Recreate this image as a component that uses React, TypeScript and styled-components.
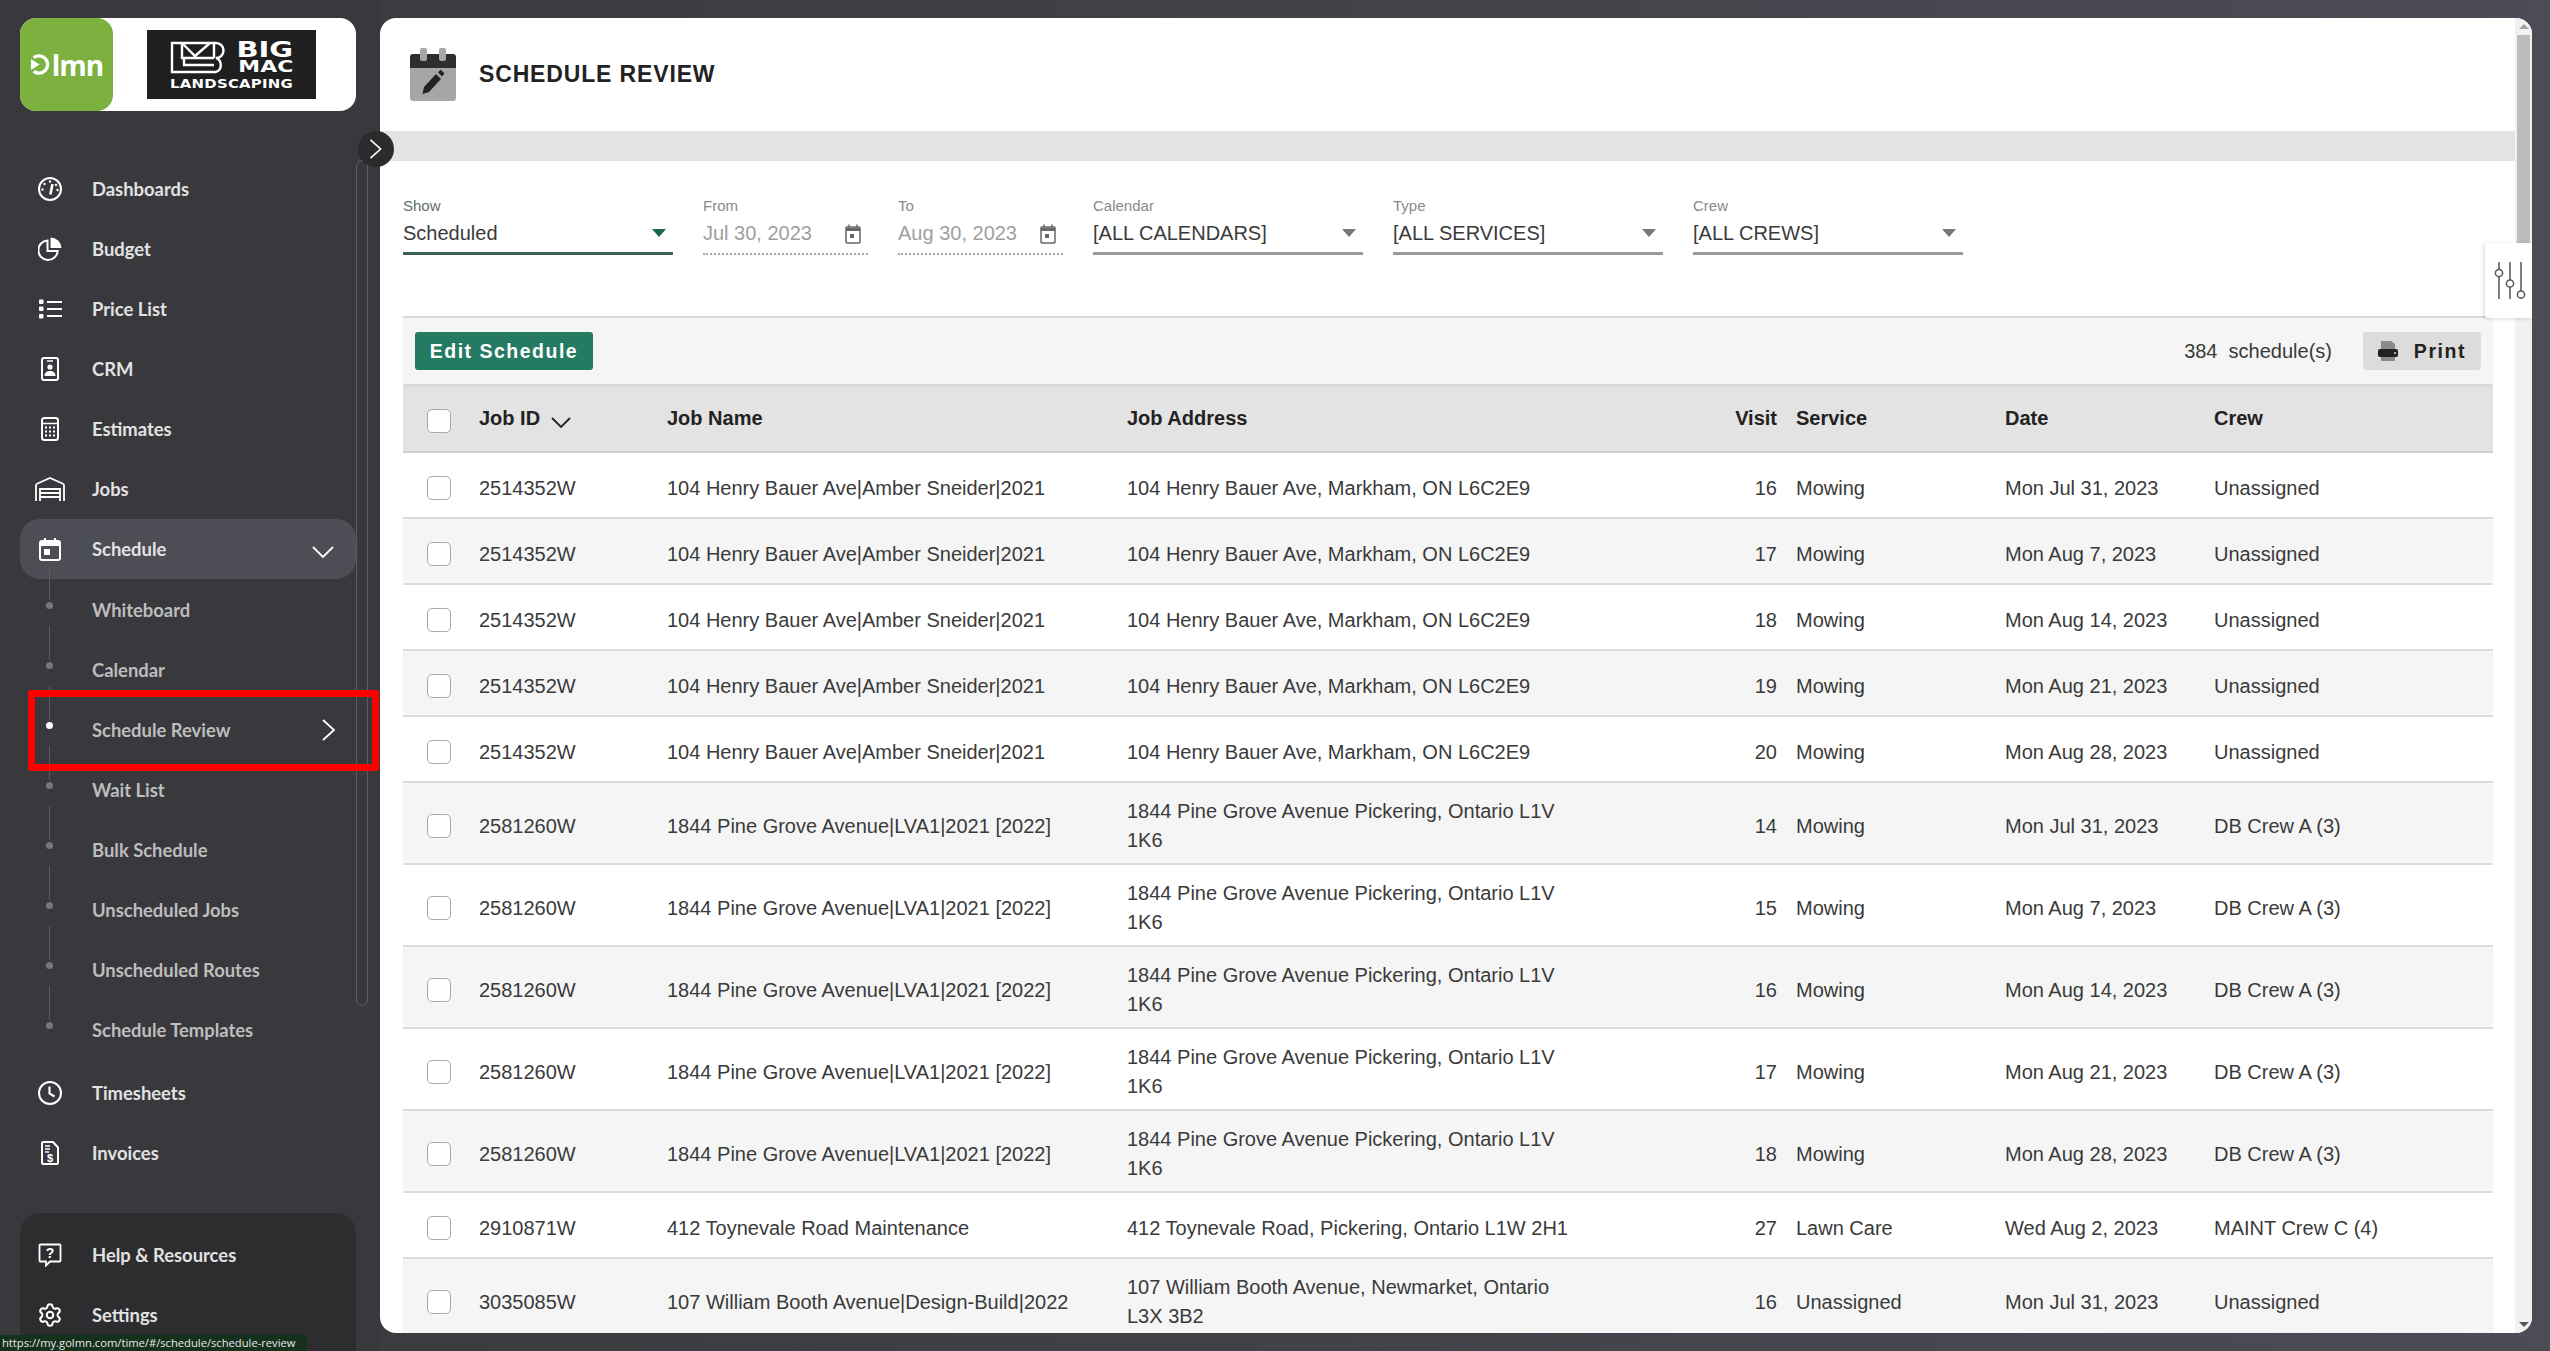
import { ReactNode } from 'react'
import styled, { createGlobalStyle } from 'styled-components'
import { Settings } from 'lucide-react'

const GlobalStyle = createGlobalStyle`
    * { box-sizing: border-box; }
    html, body { margin: 0; height: 100%; overflow: hidden; }
    body { font-family: "Liberation Sans", Arial, sans-serif; }
    #root { height: 100%; }
`

const Page = styled.div`
    display: flex;
    height: 100vh;
    background: linear-gradient(90deg, #38383c 0%, #3f3f45 40%, #4c4c56 100%);
`

const Sidebar = styled.aside`
    position: relative;
    z-index: 2;
    flex: 0 0 380px;
    display: flex;
    flex-direction: column;
    padding: 18px 24px 0 20px;
    background: #39393d;
`

const LogoCard = styled.div`
    display: flex;
    align-items: center;
    height: 93px;
    background: #fff;
    border-radius: 16px;
`

const LmnTile = styled.div`
    display: flex;
    align-items: center;
    justify-content: center;
    gap: 1px;
    width: 93px;
    height: 93px;
    background: #7cb13f;
    border-radius: 16px;
    color: #fff;
    font-family: "Open Sans", sans-serif;
    font-weight: 700;
    font-size: 28px;
    letter-spacing: -1px;
`

const BrandPlate = styled.div`
    display: flex;
    flex-direction: column;
    align-items: center;
    justify-content: center;
    gap: 5px;
    width: 169px;
    height: 69px;
    margin-left: 34px;
    background: #1f1f1f;
    color: #fff;
    font-family: "DejaVu Sans", sans-serif;
    font-weight: 700;
`

const BrandTop = styled.div`
    display: flex;
    align-items: center;
    justify-content: space-between;
    width: 123px;
`

const BrandWords = styled.div`
    display: flex;
    flex-direction: column;
    align-items: flex-end;
    line-height: 1;
`

const BrandBig = styled.span`
    font-size: 21px;
    line-height: 18px;
    transform: scaleX(1.38);
    transform-origin: right center;
`

const BrandMac = styled.span`
    font-size: 16.5px;
    line-height: 15px;
    transform: scaleX(1.33);
    transform-origin: right center;
`

const BrandSub = styled.span`
    font-size: 12px;
    line-height: 10px;
    letter-spacing: 0.2px;
    transform: scaleX(1.24);
`

const Nav = styled.nav`
    display: flex;
    flex-direction: column;
    margin-top: 48px;
`

const NavItem = styled.div<{ $active?: boolean }>`
    display: flex;
    align-items: center;
    height: 60px;
    border-radius: 20px;
    background: ${p => (p.$active ? '#4c4d55' : 'transparent')};
    color: #e2e2e2;
    font-family: Lato, sans-serif;
    font-weight: 700;
    font-size: 18.4px;
`

const NavIcon = styled.span`
    display: flex;
    align-items: center;
    justify-content: center;
    flex: 0 0 60px;
    margin-right: 12px;
    color: #fff;
`

const NavChevron = styled.span<{ $inset: number; $drop?: number }>`
    display: flex;
    margin-left: auto;
    margin-right: ${p => p.$inset}px;
    margin-top: ${p => p.$drop || 0}px;
    color: #fff;
`

const SubItem = styled.div`
    position: relative;
    display: flex;
    align-items: center;
    height: 60px;
    padding: 2px 0 0 72px;
    color: #bdbdbd;
    font-family: Lato, sans-serif;
    font-weight: 700;
    font-size: 18.4px;

    &::before {
        content: '';
        position: absolute;
        left: 29px;
        top: -13px;
        width: 1px;
        height: 34px;
        background: #5c5c61;
    }
`

const SubDot = styled.span<{ $active?: boolean }>`
    position: absolute;
    left: 26px;
    top: 23px;
    width: 7px;
    height: 7px;
    border-radius: 50%;
    background: ${p => (p.$active ? '#fff' : '#77777c')};
`

const TimeGroup = styled.div`
    display: flex;
    flex-direction: column;
    margin-top: 4px;
`

const BottomNav = styled.div`
    position: absolute;
    left: 20px;
    right: 24px;
    bottom: 0;
    height: 138px;
    padding-top: 12px;
    background: #2d2d30;
    border-radius: 20px 20px 0 0;
`

const SideScroll = styled.div`
    position: absolute;
    left: 356px;
    top: 160px;
    width: 12px;
    height: 846px;
    border: 1px solid #5c5c62;
    border-radius: 8px;
`

const ToggleButton = styled.div`
    position: absolute;
    left: 358px;
    top: 131px;
    display: flex;
    align-items: center;
    justify-content: center;
    width: 36px;
    height: 36px;
    border-radius: 50%;
    background: #2b2b2e;
    color: #fff;
`

const Highlight = styled.div`
    position: absolute;
    left: 28px;
    top: 690px;
    width: 351px;
    height: 81px;
    border: 7px solid #fe0000;
    border-radius: 3px;
`

const StatusBar = styled.div`
    position: fixed;
    left: 0;
    bottom: 0;
    z-index: 5;
    width: 307px;
    height: 16px;
    padding-left: 2px;
    overflow: hidden;
    background: #14311c;
    color: #e8e8e8;
    font-family: "Open Sans", sans-serif;
    font-size: 11.2px;
    line-height: 16px;
    white-space: nowrap;
`

const Main = styled.main`
    flex: 1;
    min-width: 0;
    padding: 18px 18px 18px 0;
`

const Panel = styled.div`
    position: relative;
    display: flex;
    height: 100%;
    overflow: hidden;
    background: #fff;
    border-radius: 16px;
`

const Content = styled.div`
    flex: 1;
    min-width: 0;
    overflow: hidden;
`

const PageHeader = styled.header`
    display: flex;
    align-items: center;
    gap: 23px;
    height: 113px;
    padding-left: 30px;
`

const PageTitle = styled.h1`
    margin: 0;
    color: #222;
    font-size: 23px;
    font-weight: 700;
    letter-spacing: 0.85px;
`

const Band = styled.div`
    height: 30px;
    background: #e3e3e5;
`

const Filters = styled.div`
    display: flex;
    gap: 30px;
    height: 155px;
    padding: 35px 0 0 23px;
`

const Field = styled.div<{ $width: number }>`
    width: ${p => p.$width}px;
`

const FieldLabel = styled.div<{ $tone?: string }>`
    height: 20px;
    color: ${p => p.$tone || '#8a8a8a'};
    font-size: 15px;
    line-height: 20px;
`

const FieldValue = styled.div<{ $line: string; $muted?: boolean; $inset: number }>`
    display: flex;
    align-items: center;
    justify-content: space-between;
    height: 39px;
    padding: 0 ${p => p.$inset}px 2px 0;
    border-bottom: ${p => p.$line};
    color: ${p => (p.$muted ? '#a0a0a0' : '#3a3a3a')};
    font-size: 20px;
`

const Caret = styled.span<{ $color: string }>`
    width: 0;
    height: 0;
    border-left: 7px solid transparent;
    border-right: 7px solid transparent;
    border-top: 8px solid ${p => p.$color};
`

const Toolbar = styled.div`
    display: flex;
    align-items: center;
    justify-content: space-between;
    height: 71px;
    margin: 0 22px 0 23px;
    padding: 0 12px;
    background: #f5f5f5;
    border-top: 2px solid #d9d9d9;
    border-bottom: 3px solid #d9d9d9;
`

const PrimaryButton = styled.button`
    height: 38px;
    width: 178px;
    border: 0;
    border-radius: 3px;
    background: #257a62;
    color: #fff;
    font: 700 19.5px "Liberation Sans", Arial, sans-serif;
    letter-spacing: 1.5px;
`

const ToolbarEnd = styled.div`
    display: flex;
    align-items: center;
    gap: 31px;
    color: #3a3a3a;
    font-size: 20px;
`

const PrintButton = styled.button`
    display: flex;
    align-items: center;
    justify-content: center;
    gap: 16px;
    height: 38px;
    width: 118px;
    border: 0;
    border-radius: 3px;
    background: #dcdcdc;
    color: #222;
    font: 700 19.5px "Liberation Sans", Arial, sans-serif;
    letter-spacing: 1.6px;
`

const Table = styled.div`
    margin: 0 22px 0 23px;
`

const columns = '76px 188px 460px 450px 200px 228px 209px 279px'

const HeadRow = styled.div`
    display: grid;
    grid-template-columns: ${columns};
    align-items: center;
    height: 66px;
    padding-bottom: 2px;
    background: #e3e3e3;
    border-bottom: 2px solid #d0d0d0;
    color: #222;
    font-size: 20px;
    font-weight: 700;
`

const Row = styled.div<{ $odd: boolean }>`
    display: grid;
    grid-template-columns: ${columns};
    align-items: center;
    min-height: 66px;
    padding: 14px 0 8px;
    background: ${p => (p.$odd ? '#fff' : '#f5f5f5')};
    border-bottom: 2px solid #dcdcdc;
    color: #3a3a3a;
    font-size: 20px;
    line-height: 29px;
`

const CheckCell = styled.div`
    display: flex;
    padding-left: 24px;
`

const Checkbox = styled.span<{ $drop?: number }>`
    display: block;
    width: 24px;
    height: 24px;
    margin-top: ${p => p.$drop || 0}px;
    background: #fff;
    border: 1px solid #a9a9a9;
    border-radius: 5px;
`

const SortCell = styled.div`
    display: flex;
    align-items: center;
    gap: 11px;
`

const SortIcon = styled.svg`
    margin-top: 10px;
`

const VisitCell = styled.div`
    text-align: right;
`

const ServiceCell = styled.div`
    padding-left: 19px;
`

const ScrollTrack = styled.div`
    display: flex;
    flex-direction: column;
    align-items: center;
    justify-content: space-between;
    flex: 0 0 17px;
    background: #f1f1f1;
`

const ScrollArrow = styled.span<{ $up?: boolean }>`
    flex: none;
    width: 0;
    height: 0;
    margin: 6px 0;
    border-left: 5px solid transparent;
    border-right: 5px solid transparent;
    border-top: ${p => (p.$up ? '0' : '5px solid #555')};
    border-bottom: ${p => (p.$up ? '5px solid #a3a3a3' : '0')};
`

const ScrollThumb = styled.div`
    width: 13px;
    height: 270px;
    margin-bottom: auto;
    background: #bdbdbd;
`

const FilterTab = styled.div`
    position: absolute;
    right: 0;
    top: 225px;
    display: flex;
    align-items: center;
    justify-content: center;
    width: 47px;
    height: 75px;
    padding-left: 3px;
    background: #fff;
    border-radius: 3px 0 0 3px;
    box-shadow: -1px 1px 4px rgba(0, 0, 0, 0.15);
`

const Svg = ({ w = 24, h = 24, children }: { w?: number; h?: number; children: ReactNode }) => (
    <svg width={w} height={h} viewBox={`0 0 ${w} ${h}`} fill="none" stroke="currentColor" strokeWidth="2">
        {children}
    </svg>
)

const icons: { [key: string]: ReactNode } = {
    dashboards: (
        <Svg>
            <circle cx="12" cy="12" r="11" />
            <path d="M14.5 7 12.4 17.5" strokeWidth="2.6" />
            <g fill="currentColor" stroke="none">
                <circle cx="12" cy="4.5" r="1.2" />
                <circle cx="6.5" cy="7" r="1.2" />
                <circle cx="4.5" cy="12.5" r="1.2" />
                <circle cx="18" cy="8" r="1.2" />
                <circle cx="19.5" cy="13" r="1.2" />
            </g>
        </Svg>
    ),
    budget: (
        <Svg>
            <path d="M9.5 3.5A9.7 9.7 0 1 0 19.7 14H9.5Z" strokeWidth="2" />
            <path d="M12.5 0.5A11 11 0 0 1 23.5 11H12.5Z" fill="currentColor" stroke="none" />
        </Svg>
    ),
    priceList: (
        <Svg h={20}>
            <path d="M9 3h15M9 10h15M9 17h15" strokeWidth="1.8" />
            <g fill="currentColor" stroke="none">
                <rect x="1" y="0.5" width="4.5" height="4.5" rx="1" />
                <rect x="1" y="7.5" width="4.5" height="4.5" rx="1" />
                <rect x="1" y="15" width="4.5" height="4.5" rx="1" />
            </g>
        </Svg>
    ),
    crm: (
        <Svg w={18} h={24}>
            <rect x="1" y="1" width="16" height="22" rx="2" />
            <path d="M6 4h6" strokeWidth="1.5" />
            <circle cx="9" cy="10" r="2.6" fill="currentColor" stroke="none" />
            <path d="M3.5 19c0-3.5 2.2-5 5.5-5s5.5 1.5 5.5 5Z" fill="currentColor" stroke="none" />
        </Svg>
    ),
    estimates: (
        <Svg w={18} h={24}>
            <rect x="1" y="1" width="16" height="22" rx="2.5" />
            <path d="M1 6.5h16" strokeWidth="1.5" />
            <path d="M4 10.5h10M4 14.5h10M4 18.5h10" strokeWidth="2" strokeDasharray="2 2" />
        </Svg>
    ),
    jobs: (
        <Svg w={30} h={24}>
            <path d="M1 24V8.5Q1 7 2.5 6.5L15 1l12.5 5.5Q29 7 29 8.5V24" strokeWidth="1.8" />
            <path d="M5 24V12h20v12M5 16h20M5 20h20" strokeWidth="1.8" />
        </Svg>
    ),
    schedule: (
        <Svg w={22} h={24}>
            <rect x="1" y="4" width="20" height="19" rx="2" />
            <path d="M1 7h20" strokeWidth="4" />
            <path d="M6 1v3M16 1v3" strokeWidth="2" />
            <rect x="5" y="12" width="6" height="6" fill="currentColor" stroke="none" />
        </Svg>
    ),
    timesheets: (
        <Svg>
            <circle cx="12" cy="12" r="11" />
            <path d="M11.5 5.5v7l5 3" strokeWidth="2.2" />
        </Svg>
    ),
    invoices: (
        <Svg w={18} h={24}>
            <path d="M2.5 1H12l5 5.5V21.5Q17 23 15.5 23H2.5Q1 23 1 21.5V2.5Q1 1 2.5 1Z" />
            <path d="M4 5h5M4 8h5M4 11h4" strokeWidth="1.5" />
            <text x="9" y="21" textAnchor="middle" fontSize="11" fontWeight="700" fontFamily="Liberation Sans" fill="currentColor" stroke="none">$</text>
        </Svg>
    ),
    help: (
        <Svg>
            <path d="M2.5 1.5h19q1 0 1 1v15q0 1-1 1H12l-4 4v-4H2.5q-1 0-1-1v-15q0-1 1-1Z" strokeWidth="1.8" />
            <text x="12" y="15" textAnchor="middle" fontSize="14" fontWeight="700" fontFamily="Liberation Sans" fill="currentColor" stroke="none">?</text>
        </Svg>
    ),
}

const ChevronRight = ({ size = 24 }: { size?: number }) => (
    <svg width={size} height={size} viewBox="0 0 24 24" fill="none" stroke="currentColor" strokeWidth="1.8">
        <path d="M6 2l11 10L6 22" />
    </svg>
)

const ChevronDown = () => (
    <svg width="22" height="14" viewBox="0 0 22 14" fill="none" stroke="currentColor" strokeWidth="1.8">
        <path d="M1 2l10 10L21 2" />
    </svg>
)

const TitleIcon = () => (
    <svg width="46" height="53" viewBox="0 0 46 53">
        <path d="M0 9a3 3 0 0 1 3-3h40a3 3 0 0 1 3 3v11H0Z" fill="#2e2e30" />
        <path d="M0 20h46v30a3 3 0 0 1-3 3H3a3 3 0 0 1-3-3Z" fill="#a6a6a6" />
        <rect x="10" y="0" width="7" height="13" rx="2" fill="#a6a6a6" />
        <rect x="29" y="0" width="7" height="13" rx="2" fill="#a6a6a6" />
        <path d="M12.5 46l1.5-7 12-13 5 5-12 13Z" fill="#222" />
        <path d="M28 24.5l2.5-3 4 4-2.5 3Z" fill="#222" />
    </svg>
)

const DateIcon = () => (
    <svg width="16" height="20" viewBox="0 0 16 20" fill="none" stroke="#666" strokeWidth="1.5">
        <rect x="1" y="3" width="14" height="16" rx="1" />
        <path d="M1 5.5h14" strokeWidth="3" />
        <path d="M4 0.5v3M12 0.5v3" />
        <rect x="5" y="10" width="4" height="4" fill="#666" stroke="none" />
    </svg>
)

const PrintIcon = () => (
    <svg width="20" height="20" viewBox="0 0 20 20">
        <path d="M3 0h10l4 3v6H3Z" fill="#8a8a8a" />
        <rect x="3" y="14" width="14" height="6" rx="1" fill="#8a8a8a" />
        <rect x="0" y="8" width="20" height="8" rx="2" fill="#222" />
        <circle cx="17" cy="12" r="1" fill="#ddd" />
    </svg>
)

const SlidersIcon = () => (
    <svg width="32" height="38" viewBox="0 0 32 38" fill="none" stroke="#555" strokeWidth="1.5">
        <path d="M5 0v7M5 15v22M16 0v18M16 25v12M27 0v29M27 36v1" />
        <circle cx="5" cy="11" r="3.6" />
        <circle cx="16" cy="21.5" r="3.6" />
        <circle cx="27" cy="32.5" r="3.6" />
    </svg>
)

const LmnMark = () => (
    <svg width="21" height="23" viewBox="0 0 23 23" fill="none" stroke="#fff" strokeWidth="3.6">
        <path d="M4 4a9.5 9.5 0 1 1 0 15" />
        <path d="M1 5.5l9.5 6-9.5 6Z" fill="#fff" stroke="none" />
    </svg>
)

const BrandMark = () => (
    <svg width="57" height="33" viewBox="0 0 57 33" fill="none" stroke="#fff" strokeWidth="2.4">
        <path d="M2 2H46a7.5 7.5 0 0 1 0 15 7.5 7.5 0 0 1 0 14H2Z" />
        <path d="M12 2V17H44M12 2l13 13L40 2M44 2v15M14 17v7h30" />
    </svg>
)

type Job = {
    id: string
    name: string
    address: string
    visit: number
    service: string
    date: string
    crew: string
}

const dates = ['Mon Jul 31, 2023', 'Mon Aug 7, 2023', 'Mon Aug 14, 2023', 'Mon Aug 21, 2023', 'Mon Aug 28, 2023']

const jobs: Job[] = [
    ...dates.map((date, i) => ({
        id: '2514352W',
        name: '104 Henry Bauer Ave|Amber Sneider|2021',
        address: '104 Henry Bauer Ave, Markham, ON L6C2E9',
        visit: 16 + i,
        service: 'Mowing',
        date,
        crew: 'Unassigned',
    })),
    ...dates.map((date, i) => ({
        id: '2581260W',
        name: '1844 Pine Grove Avenue|LVA1|2021 [2022]',
        address: '1844 Pine Grove Avenue Pickering, Ontario L1V 1K6',
        visit: 14 + i,
        service: 'Mowing',
        date,
        crew: 'DB Crew A (3)',
    })),
    {
        id: '2910871W',
        name: '412 Toynevale Road Maintenance',
        address: '412 Toynevale Road, Pickering, Ontario L1W 2H1',
        visit: 27,
        service: 'Lawn Care',
        date: 'Wed Aug 2, 2023',
        crew: 'MAINT Crew C (4)',
    },
    {
        id: '3035085W',
        name: '107 William Booth Avenue|Design-Build|2022',
        address: '107 William Booth Avenue, Newmarket, Ontario L3X 3B2',
        visit: 16,
        service: 'Unassigned',
        date: 'Mon Jul 31, 2023',
        crew: 'Unassigned',
    },
]

const topNav = [
    { label: 'Dashboards', icon: 'dashboards' },
    { label: 'Budget', icon: 'budget' },
    { label: 'Price List', icon: 'priceList' },
    { label: 'CRM', icon: 'crm' },
    { label: 'Estimates', icon: 'estimates' },
    { label: 'Jobs', icon: 'jobs' },
]

const subNav = [
    'Whiteboard',
    'Calendar',
    'Schedule Review',
    'Wait List',
    'Bulk Schedule',
    'Unscheduled Jobs',
    'Unscheduled Routes',
    'Schedule Templates',
]

const selects = [
    { label: 'Calendar', value: '[ALL CALENDARS]' },
    { label: 'Type', value: '[ALL SERVICES]' },
    { label: 'Crew', value: '[ALL CREWS]' },
]

const App = () => {
    return (
        <Page>
            <GlobalStyle />
            <Sidebar>
                <LogoCard>
                    <LmnTile>
                        <LmnMark />
                        <span>lmn</span>
                    </LmnTile>
                    <BrandPlate>
                        <BrandTop>
                            <BrandMark />
                            <BrandWords>
                                <BrandBig>BIG</BrandBig>
                                <BrandMac>MAC</BrandMac>
                            </BrandWords>
                        </BrandTop>
                        <BrandSub>LANDSCAPING</BrandSub>
                    </BrandPlate>
                </LogoCard>
                <Nav>
                    {topNav.map(item => (
                        <NavItem key={item.label}>
                            <NavIcon>{icons[item.icon]}</NavIcon>
                            {item.label}
                        </NavItem>
                    ))}
                    <NavItem $active>
                        <NavIcon>{icons.schedule}</NavIcon>
                        Schedule
                        <NavChevron $inset={22} $drop={6}><ChevronDown /></NavChevron>
                    </NavItem>
                    {subNav.map(label => (
                        <SubItem key={label}>
                            <SubDot $active={label === 'Schedule Review'} />
                            {label}
                            {label === 'Schedule Review' && (
                                <NavChevron $inset={15}><ChevronRight /></NavChevron>
                            )}
                        </SubItem>
                    ))}
                    <TimeGroup>
                        <NavItem>
                            <NavIcon>{icons.timesheets}</NavIcon>
                            Timesheets
                        </NavItem>
                        <NavItem>
                            <NavIcon>{icons.invoices}</NavIcon>
                            Invoices
                        </NavItem>
                    </TimeGroup>
                </Nav>
                <BottomNav>
                    <NavItem>
                        <NavIcon>{icons.help}</NavIcon>
                        Help &amp; Resources
                    </NavItem>
                    <NavItem>
                        <NavIcon><Settings size={26} strokeWidth={1.9} /></NavIcon>
                        Settings
                    </NavItem>
                </BottomNav>
                <SideScroll />
                <ToggleButton><ChevronRight size={22} /></ToggleButton>
                <Highlight />
            </Sidebar>
            <Main>
                <Panel>
                    <Content>
                        <PageHeader>
                            <TitleIcon />
                            <PageTitle>SCHEDULE REVIEW</PageTitle>
                        </PageHeader>
                        <Band />
                        <Filters>
                            <Field $width={270}>
                                <FieldLabel $tone="#5f6f69">Show</FieldLabel>
                                <FieldValue $line="3px solid #3d5f55" $inset={7}>
                                    Scheduled
                                    <Caret $color="#1f6351" />
                                </FieldValue>
                            </Field>
                            <Field $width={165}>
                                <FieldLabel>From</FieldLabel>
                                <FieldValue $line="2px dotted #a8a8a8" $muted $inset={7}>
                                    Jul 30, 2023
                                    <DateIcon />
                                </FieldValue>
                            </Field>
                            <Field $width={165}>
                                <FieldLabel>To</FieldLabel>
                                <FieldValue $line="2px dotted #a8a8a8" $muted $inset={7}>
                                    Aug 30, 2023
                                    <DateIcon />
                                </FieldValue>
                            </Field>
                            {selects.map(select => (
                                <Field $width={270} key={select.label}>
                                    <FieldLabel>{select.label}</FieldLabel>
                                    <FieldValue $line="3px solid #999" $inset={7}>
                                        {select.value}
                                        <Caret $color="#777" />
                                    </FieldValue>
                                </Field>
                            ))}
                        </Filters>
                        <Toolbar>
                            <PrimaryButton>Edit Schedule</PrimaryButton>
                            <ToolbarEnd>
                                <span>384&nbsp; schedule(s)</span>
                                <PrintButton>
                                    <PrintIcon />
                                    Print
                                </PrintButton>
                            </ToolbarEnd>
                        </Toolbar>
                        <Table>
                            <HeadRow>
                                <CheckCell><Checkbox $drop={6} /></CheckCell>
                                <SortCell>
                                    Job ID
                                    <SortIcon width="20" height="12" viewBox="0 0 20 12" fill="none" stroke="#222" strokeWidth="1.8">
                                        <path d="M1 1l9 9 9-9" />
                                    </SortIcon>
                                </SortCell>
                                <div>Job Name</div>
                                <div>Job Address</div>
                                <VisitCell>Visit</VisitCell>
                                <ServiceCell>Service</ServiceCell>
                                <div>Date</div>
                                <div>Crew</div>
                            </HeadRow>
                            {jobs.map((job, i) => (
                                <Row $odd={i % 2 === 0} key={job.id + job.visit}>
                                    <CheckCell><Checkbox /></CheckCell>
                                    <div>{job.id}</div>
                                    <div>{job.name}</div>
                                    <div>{job.address}</div>
                                    <VisitCell>{job.visit}</VisitCell>
                                    <ServiceCell>{job.service}</ServiceCell>
                                    <div>{job.date}</div>
                                    <div>{job.crew}</div>
                                </Row>
                            ))}
                        </Table>
                    </Content>
                    <ScrollTrack>
                        <ScrollArrow $up />
                        <ScrollThumb />
                        <ScrollArrow />
                    </ScrollTrack>
                    <FilterTab><SlidersIcon /></FilterTab>
                </Panel>
            </Main>
            <StatusBar>https://my.golmn.com/time/#/schedule/schedule-review</StatusBar>
        </Page>
    )
}

export default App
